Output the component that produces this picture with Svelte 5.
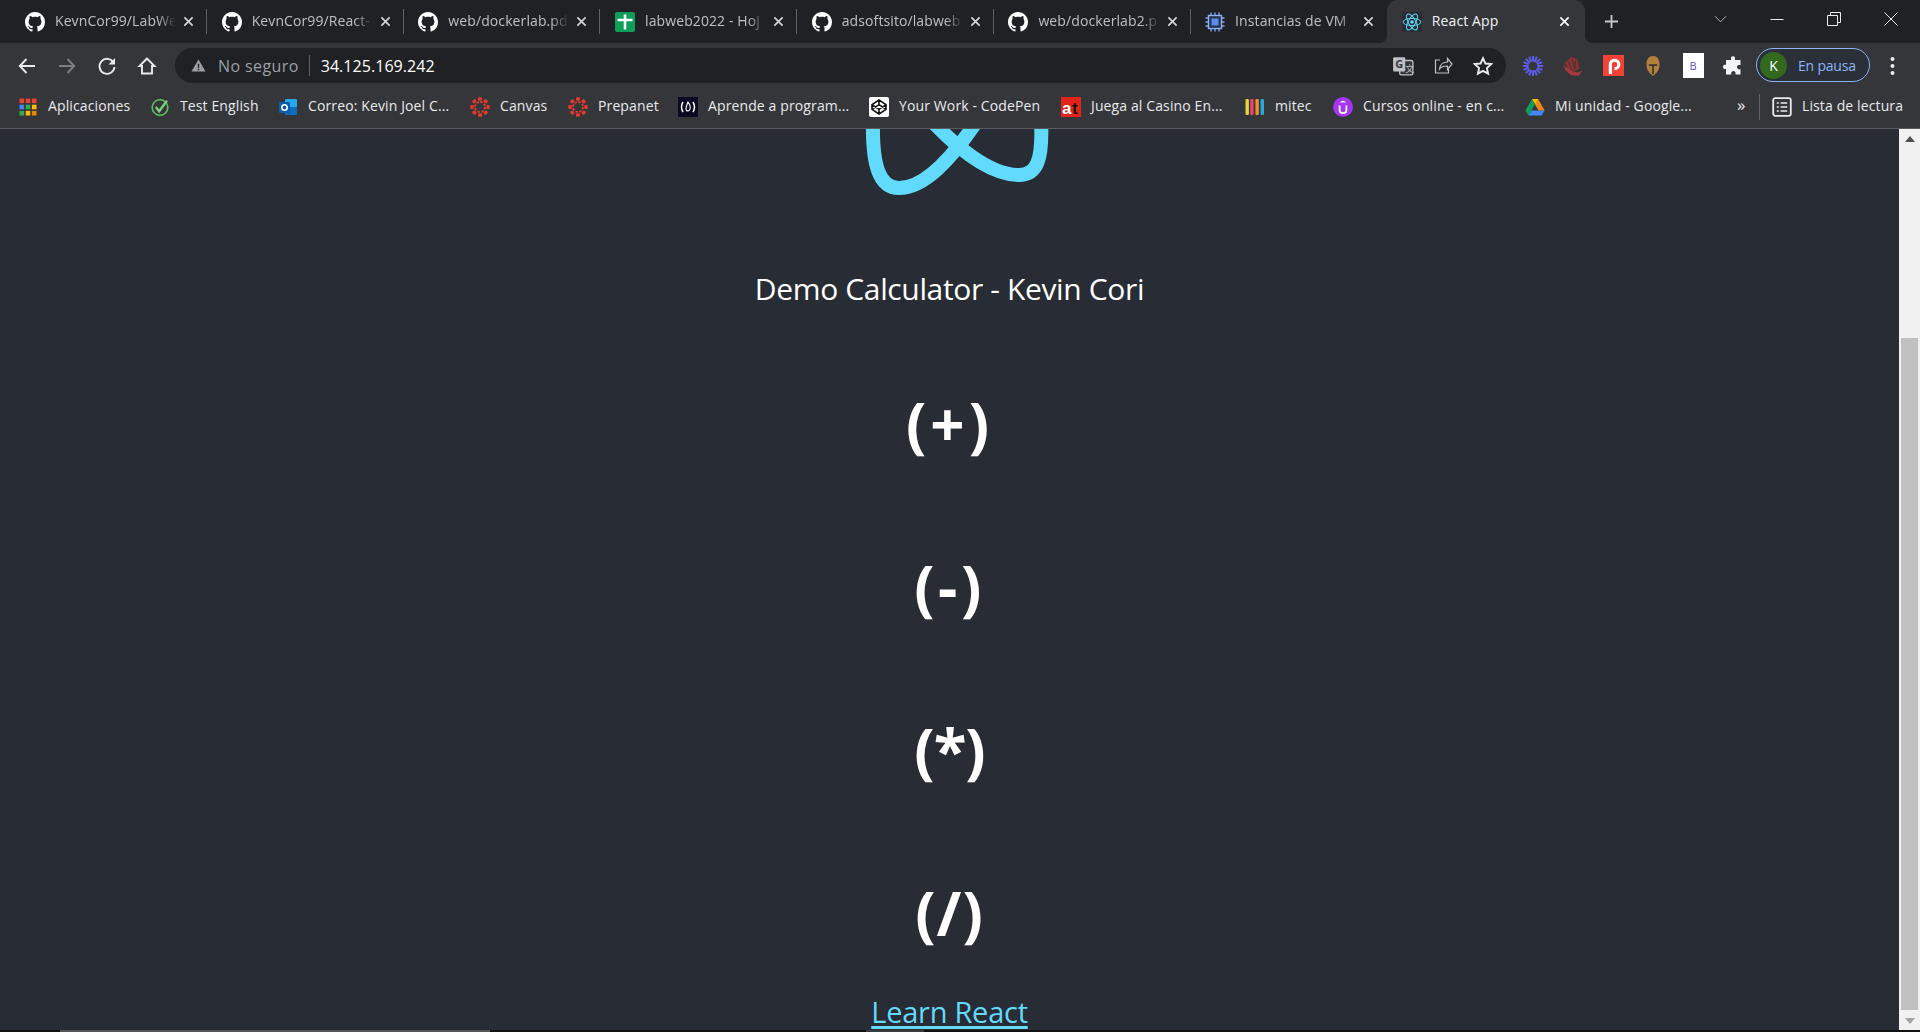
<script>
  const tabs = [
    { icon: 'github', title: 'KevnCor99/LabWe' },
    { icon: 'github', title: 'KevnCor99/React-' },
    { icon: 'github', title: 'web/dockerlab.pd' },
    { icon: 'sheets', title: 'labweb2022 - Hoj' },
    { icon: 'github', title: 'adsoftsito/labweb' },
    { icon: 'github', title: 'web/dockerlab2.p' },
    { icon: 'chip', title: 'Instancias de VM' },
    { icon: 'react', title: 'React App', active: true }
  ];
  const bookmarks = [
    { icon: 'grid', label: 'Aplicaciones', w: 132 },
    { icon: 'check', label: 'Test English', w: 128 },
    { icon: 'outlook', label: 'Correo: Kevin Joel C...', w: 192 },
    { icon: 'canvas', label: 'Canvas', w: 98 },
    { icon: 'canvas', label: 'Prepanet', w: 110 },
    { icon: 'fcc', label: 'Aprende a program...', w: 191 },
    { icon: 'codepen', label: 'Your Work - CodePen', w: 192 },
    { icon: 'at', label: 'Juega al Casino En...', w: 184 },
    { icon: 'mitec', label: 'mitec', w: 88 },
    { icon: 'udemy', label: 'Cursos online - en c...', w: 192 },
    { icon: 'drive', label: 'Mi unidad - Google...', w: 202 }
  ];
  const dots = [0, 45, 90, 135, 180, 225, 270, 315];
  const ops = ['(+)', '(-)', '(*)', '(/)'];
</script>

{#snippet fav(name)}
  <svg class="fav" viewBox="0 0 20 20" aria-hidden="true">
    {#if name === 'github'}
      <g transform="scale(1.25)"><path fill="#fff" d="M8 0C3.58 0 0 3.58 0 8c0 3.54 2.29 6.53 5.47 7.59.4.07.55-.17.55-.38 0-.19-.01-.82-.01-1.49-2.01.37-2.53-.49-2.69-.94-.09-.23-.48-.94-.82-1.13-.28-.15-.68-.52-.01-.53.63-.01 1.08.58 1.23.82.72 1.21 1.87.87 2.33.66.07-.52.28-.87.51-1.07-1.78-.2-3.64-.89-3.64-3.95 0-.87.31-1.59.82-2.15-.08-.2-.36-1.02.08-2.12 0 0 .67-.21 2.2.82.64-.18 1.32-.27 2-.27.68 0 1.36.09 2 .27 1.53-1.04 2.2-.82 2.2-.82.44 1.1.16 1.92.08 2.12.51.56.82 1.27.82 2.15 0 3.07-1.87 3.75-3.65 3.95.29.25.54.73.54 1.48 0 1.07-.01 1.93-.01 2.2 0 .21.15.46.55.38A8.013 8.013 0 0016 8c0-4.42-3.58-8-8-8z"/></g>
    {:else if name === 'sheets'}
      <rect width="20" height="20" rx="2" fill="#0f9d58"/><path d="M2.500 8h15M10 2.500v15" stroke="#fff" stroke-width="2.600"/>
    {:else if name === 'chip'}
      <path d="M6 0.500v19M10 0.500v19M14 0.500v19M0.500 6h19M0.500 10h19M0.500 14h19" stroke="#7ba6f5" stroke-width="1.400"/>
      <rect x="3.500" y="3.500" width="13" height="13" fill="#26304a" stroke="#8ab4f8" stroke-width="1.400"/><rect x="6.500" y="6.500" width="7" height="7" fill="#5b8def"/>
    {:else if name === 'react'}
      <rect width="20" height="20" rx="2" fill="#282c34"/>
      <g fill="none" stroke="#61dafb" stroke-width="1">
        <ellipse cx="10" cy="10" rx="9" ry="3.600"/><ellipse cx="10" cy="10" rx="9" ry="3.600" transform="rotate(60 10 10)"/><ellipse cx="10" cy="10" rx="9" ry="3.600" transform="rotate(120 10 10)"/>
      </g><circle cx="10" cy="10" r="1.800" fill="#61dafb"/>
    {:else if name === 'grid'}
      <g>
        <rect x="1.500" y="1.500" width="4.600" height="4.600" fill="#ea4335"/><rect x="7.700" y="1.500" width="4.600" height="4.600" fill="#ea4335"/><rect x="13.900" y="1.500" width="4.600" height="4.600" fill="#ea4335"/>
        <rect x="1.500" y="7.700" width="4.600" height="4.600" fill="#4285f4"/><rect x="7.700" y="7.700" width="4.600" height="4.600" fill="#34a853"/><rect x="13.900" y="7.700" width="4.600" height="4.600" fill="#fbbc04"/>
        <rect x="1.500" y="13.900" width="4.600" height="4.600" fill="#34a853"/><rect x="7.700" y="13.900" width="4.600" height="4.600" fill="#fbbc04"/><rect x="13.900" y="13.900" width="4.600" height="4.600" fill="#ea8600"/>
      </g>
    {:else if name === 'check'}
      <circle cx="10" cy="10.500" r="7.800" fill="none" stroke="#5cb85c" stroke-width="1.700"/><path d="M5.800 10l3.400 4.200L17 3.600" fill="none" stroke="#7ed07e" stroke-width="2.400"/>
    {:else if name === 'outlook'}
      <rect x="7" y="2" width="12" height="16" rx="1" fill="#28a8ea"/><rect x="7" y="10" width="12" height="8" fill="#0f6cbd"/>
      <rect x="1" y="5" width="11" height="11" rx="1" fill="#0a5ea8"/><circle cx="6.500" cy="10.500" r="2.700" fill="none" stroke="#fff" stroke-width="1.600"/>
    {:else if name === 'canvas'}
      <circle cx="10" cy="10" r="5" fill="none" stroke="#e13a2e" stroke-width="1.800" stroke-dasharray="2.500 1.400"/>
      {#each dots as a}
        <rect x="8" y="0.300" width="4" height="3.400" rx="1" fill="#e8392c" transform="rotate({a} 10 10)"/>
      {/each}
    {:else if name === 'fcc'}
      <rect width="20" height="20" fill="#0a0a23"/>
      <path d="M5 5Q2 10 5 15M15 5q3 5 0 10" fill="none" stroke="#fff" stroke-width="1.500"/>
      <path d="M10 5q3 4 2 7q-1 2-2 2q-2 0-2-2q0-2 2-7z" fill="none" stroke="#fff" stroke-width="1.100"/>
    {:else if name === 'codepen'}
      <rect width="20" height="20" rx="2" fill="#fff"/>
      <path d="M10 3l7 4.600v4.800L10 17l-7-4.600V7.600zM3 7.600l7 4.700 7-4.700M3 12.400l7-4.700 7 4.700M10 3v4.700M10 12.300V17" fill="none" stroke="#111" stroke-width="1.600"/>
    {:else if name === 'at'}
      <rect width="20" height="20" fill="#e2231a"/>
      <text x="1" y="17" class="at-a">a</text><text x="11" y="17" class="at-t">t</text>
    {:else if name === 'mitec'}
      <rect x="0.500" y="2" width="3.400" height="16" rx="1.200" fill="#e6d33c"/><rect x="5.200" y="2" width="3.400" height="16" rx="1.200" fill="#e8446f"/><rect x="10.400" y="2" width="3.400" height="16" rx="1.200" fill="#f39325"/><rect x="15.600" y="2" width="3.400" height="16" rx="1.200" fill="#27a9e1"/>
    {:else if name === 'udemy'}
      <circle cx="10" cy="10" r="10" fill="#a435f0"/>
      <path d="M6.600 8.500v4.200q0 3.400 3.400 3.400t3.400-3.400V8.500" fill="none" stroke="#fff" stroke-width="1.800"/><path d="M10 3.500l3.500 2.100h-7z" fill="#fff"/>
    {:else if name === 'drive'}
      <path d="M7 2h6l6.600 11.400h-6z" fill="#fbbc04"/><path d="M7 2l3 5.500L3.500 18.600.4 13.400z" fill="#0f9d58"/><path d="M6.600 13.400h13l-3 5.200h-13z" fill="#4285f4"/><path d="M13 2l6.600 11.400h-6L10 7.500z" fill="#ea4335" opacity=".45"/>
    {:else if name === 'reading'}
      <rect x="1.200" y="1.200" width="17.600" height="17.600" rx="2" fill="none" stroke="#e8eaed" stroke-width="1.800"/>
      <path d="M4.800 6h2M4.800 10h2M4.800 14h2M8.600 6h6.600M8.600 10h6.600M8.600 14h6.600" stroke="#e8eaed" stroke-width="1.600"/>
    {/if}
  </svg>
{/snippet}

<div class="window">
  <header class="tabstrip">
    {#each tabs as t}
      <div class="tab" class:active={t.active}>
        {@render fav(t.icon)}
        <span class="tab-title">{t.title}</span>
        <svg class="tab-close" viewBox="0 0 12 12"><path d="M1.500 1.500l9 9M10.500 1.500l-9 9"/></svg>
      </div>
    {/each}
    <svg class="new-tab" viewBox="0 0 16 16"><path d="M8 1v14M1 8h14"/></svg>
    <div class="win-controls">
      <svg class="win-chevron" viewBox="0 0 14 8"><path d="M1 1l6 6 6-6"/></svg>
      <span class="win-btn"><svg viewBox="0 0 14 14"><path d="M0.500 7.500h13"/></svg></span>
      <span class="win-btn"><svg viewBox="0 0 14 14"><path d="M3.500 3V0.500h10v10H11M0.500 3.500h10v10H0.500z"/></svg></span>
      <span class="win-btn"><svg viewBox="0 0 14 14"><path d="M0.500 0.500l13 13M13.500 0.500l-13 13"/></svg></span>
    </div>
  </header>

  <div class="toolbar">
    <span class="tool"><svg viewBox="0 0 20 20"><path d="M18 10H3M9.500 3L2.800 10l6.700 7"/></svg></span>
    <span class="tool dim"><svg viewBox="0 0 20 20"><path d="M2 10h15M10.500 3l6.700 7-6.700 7"/></svg></span>
    <span class="tool"><svg viewBox="0 0 20 20"><path d="M16.500 6.500A7.500 7.500 0 1 0 17.500 11"/><path class="solid" d="M18 2v6.500h-6.500z"/></svg></span>
    <span class="tool"><svg viewBox="0 0 20 20"><path d="M10 2.500L2.500 10H5v7.500h10V10h2.500z"/></svg></span>
    <div class="omnibox">
      <svg class="warn" viewBox="0 0 16 16"><path d="M8 1.500L15.500 14.500H0.500z" fill="#9aa0a6"/><path d="M8 6v4.500M8 11.500v1.500" stroke="#202124" stroke-width="1.500"/></svg>
      <span class="insecure">No seguro</span>
      <span class="sep"></span>
      <span class="url">34.125.169.242</span>
      <span class="omni-right">
        <span class="tool"><svg class="translate" viewBox="0 0 20 20"><rect x="7" y="5" width="12" height="13" rx="1.500" fill="#35363a" stroke="#bdc1c6" stroke-width="1.200"/><rect x="1" y="2" width="11" height="13" rx="1" fill="#bdc1c6" stroke="none"/><text x="3" y="12" class="tr-g">G</text><text x="12" y="15" class="tr-x">文</text></svg></span>
        <span class="tool"><svg viewBox="0 0 20 20"><path class="thin" d="M7 4H2.500v13h13v-4"/><path class="thin" d="M6.500 13c.5-4 3.500-7 8-7V2.500l4.500 5.500-4.500 5.500V10c-4 0-6.500 1-8 3z"/></svg></span>
        <span class="tool"><svg viewBox="0 0 20 20"><path d="M10 2.200l2.400 5.300 5.800.6-4.300 3.900 1.200 5.700-5.100-2.900-5.100 2.900 1.200-5.700-4.300-3.900 5.800-.6z"/></svg></span>
      </span>
    </div>
    <span class="tool"><svg class="burst" viewBox="0 0 24 24"><path d="M12 1v22M1 12h22M4.200 4.200l15.600 15.600M19.800 4.200L4.200 19.800M7.800 1.800l8.400 20.400M16.200 1.800L7.800 22.200M1.800 7.800l20.400 8.400M22.200 7.800L1.800 16.200"/><circle cx="12" cy="12" r="5" class="burst-hole"/></svg></span>
    <span class="tool"><svg class="plain" viewBox="0 0 24 24"><path d="M3 9l7-7 7 3 2 10-9 4z" fill="#8f2f2f"/><path d="M1 11l3 6 6 5 8 .5 5-6-6 2.500-6-1.500z" fill="#a33a3a"/><path d="M7 7l4 10M11 4l3 11M15 6l-1 10" stroke="#35363a" stroke-width="1"/></svg></span>
    <span class="tool"><svg class="ext-square" viewBox="0 0 20 20"><rect width="20" height="20" fill="#f44336"/><path d="M7 18V9a4 4 0 1 1 4 4" fill="none" stroke="#fff" stroke-width="3"/></svg></span>
    <span class="tool"><svg class="plain" viewBox="0 0 20 24"><path d="M3 10q0-9 7-9t7 9q1 7-7 13q-8-6-7-13z" fill="#b5803a"/><path d="M5.500 11h9M10 11v10" stroke="#35363a" stroke-width="1.800"/></svg></span>
    <span class="tool"><span class="boot">B</span></span>
    <span class="tool"><svg viewBox="0 0 20 20"><path class="solid-w" d="M8 1.500a2.200 2.200 0 0 1 4 0V4h5.500v5h-2a2.200 2.200 0 0 0 0 4.200h2V18.500H12.500v-2a2.200 2.200 0 0 0-4.200 0v2H3v-5.500H1.500a2.200 2.200 0 0 1 0-4.200H3V4h5z"/></svg></span>
    <div class="profile"><span class="avatar">K</span><span class="paused">En pausa</span></div>
    <span class="tool"><svg class="menu" viewBox="0 0 4 20"><circle cx="2" cy="3" r="2"/><circle cx="2" cy="10" r="2"/><circle cx="2" cy="17" r="2"/></svg></span>
  </div>

  <nav class="bookmarks">
    {#each bookmarks as b}
      <div class="bm" style="width:{b.w}px">
        {@render fav(b.icon)}
        <span>{b.label}</span>
      </div>
    {/each}
    <span class="more">»</span>
    <span class="bm-sep"></span>
    <div class="bm reading">
      {@render fav('reading')}
      <span>Lista de lectura</span>
    </div>
  </nav>

  <div class="viewport">
    <main class="page">
      <svg class="logo" viewBox="850 129 220 70" aria-hidden="true">
        <path d="M874 120C873 165 880 188 900 188C925 188 952 160 980 118"/>
        <path d="M930 118C955 145 990 175 1020 175C1038 175 1044 160 1042 120"/>
      </svg>
      <p class="title">Demo Calculator - Kevin Cori</p>
      {#each ops as op}
        <h1 class="op">{op}</h1>
      {/each}
      <a class="learn" href="#learn">Learn React</a>
    </main>
    <div class="scrollbar">
      <span class="arrow up"></span>
      <div class="track"><div class="thumb"></div></div>
      <span class="arrow down"></span>
    </div>
  </div>

  <footer class="edge"><span class="edge-a"></span><span class="edge-b"></span></footer>
</div>

<style>
  :global(body) { margin: 0; background: #202124; }
  .window {
    height: 1032px; width: 1920px; display: flex; flex-direction: column; overflow: hidden;
    font-family: "Open Sans", "Noto Sans", sans-serif;
  }
  svg { display: block; flex: none; }
  .fav { width: 20px; height: 20px; }

  .tabstrip { height: 43px; flex: none; background: #202124; display: flex; align-items: stretch; padding-left: 10.400px; }
  .tab {
    width: 196.700px; flex: none; box-sizing: border-box; display: flex; align-items: center;
    padding: 0 12px 0 14.600px; position: relative; color: #bdc1c6; font-size: 14px; letter-spacing: 0.1px;
  }
  .tab::after { content: ""; position: absolute; right: 0; top: 9px; bottom: 9px; width: 1px; background: #5f6368; }
  .tab:nth-child(7)::after, .tab.active::after { display: none; }
  .tab-title {
    margin-left: 10px; padding-bottom: 2px; flex: 1; min-width: 0; white-space: nowrap; overflow: hidden;
    -webkit-mask-image: linear-gradient(90deg, #000 85%, transparent 100%);
    mask-image: linear-gradient(90deg, #000 85%, transparent 100%);
  }
  .tab-close { width: 11px; height: 11px; margin-left: 7px; margin-right: 1px; fill: none; stroke: #d5d7da; stroke-width: 1.800; }
  .tab.active { background: #35363a; border-radius: 11px 11px 0 0; color: #f1f3f4; width: 198px; padding-right: 14px; }
  .tab.active .tab-title { -webkit-mask-image: none; mask-image: none; }
  .tab.active .tab-close { stroke: #fff; }
  .tab.active::before, .tab.active::after {
    content: ""; display: block; position: absolute; bottom: 0; top: auto; width: 8px; height: 8px; background: transparent;
  }
  .tab.active::before { left: -8px; background: radial-gradient(circle at 0 0, #202124 8px, #35363a 8.500px); }
  .tab.active::after { right: -8px; background: radial-gradient(circle at 100% 0, #202124 8px, #35363a 8.500px); }
  .new-tab { width: 15px; height: 15px; margin: 14px 0 0 19px; fill: none; stroke: #c4c7c5; stroke-width: 2; }
  .win-controls { margin-left: auto; display: flex; align-items: flex-start; }
  .win-chevron { width: 13px; height: 8px; margin: 15px 21px 0 0; fill: none; stroke: #bdc1c6; stroke-width: 1; }
  .win-btn { width: 57.300px; height: 38px; display: flex; align-items: center; justify-content: center; }
  .win-btn svg { width: 14px; height: 14px; fill: none; stroke: #e8eaed; stroke-width: 1; }

  .toolbar { height: 45px; flex: none; box-sizing: border-box; background: #35363a; display: flex; align-items: flex-start; padding: 5px 8px 0 7px; }
  .tool { width: 40px; height: 35px; flex: none; display: flex; align-items: center; justify-content: center; }
  .tool > svg { width: 20px; height: 20px; fill: none; stroke: #e8eaed; stroke-width: 1.900; }
  .tool.dim > svg { stroke: #7c7f84; }
  .tool .solid { fill: #e8eaed; stroke: none; }
  .tool .thin { stroke: #bdc1c6; stroke-width: 1.200; }
  .tool > svg.ext-square { stroke: none; width: 21px; height: 25px; }
  .tool > svg.plain { stroke: none; width: 22px; height: 22px; }
  .tool > svg.menu { width: 5px; height: 20px; fill: #e8eaed; stroke: none; }
  .tool > svg.translate { stroke: none; width: 22px; height: 22px; }
  .tool > svg.burst { stroke: #5e5ef0; stroke-width: 2.200; width: 22px; height: 22px; }
  .tool .burst-hole { fill: #35363a; stroke: none; }
  .tool > svg .solid-w { fill: #f1f3f4; stroke: none; }
  .omnibox {
    flex: 1; min-width: 0; height: 35px; margin: 0 7px 0 8px; background: #202124; border-radius: 18px;
    display: flex; align-items: center; padding-left: 16px; color: #e8eaed; font-size: 16px;
  }
  .warn { width: 15px; height: 15px; }
  .insecure { color: #9aa0a6; margin-left: 12px; letter-spacing: 0.4px; }
  .sep { width: 1px; height: 21px; background: #5f6368; margin: 0 11px 0 10px; }
  .url { color: #fff; letter-spacing: 0.05px; }
  .omni-right { margin-left: auto; display: flex; margin-right: 3px; }
  .tr-g { font: 700 10px "Open Sans", sans-serif; fill: #35363a; }
  .tr-x { font: 8px "Noto Sans CJK SC", sans-serif; fill: #bdc1c6; }
  .at-a { font: 700 17px "Liberation Sans", sans-serif; fill: #fff; }
  .at-t { font: 700 17px "Liberation Sans", sans-serif; fill: #111; }
  .boot { width: 21px; height: 25px; background: #fff; color: #5b4fc9; font-size: 11px; display: flex; align-items: center; justify-content: center; }
  .profile {
    width: 114px; height: 34px; box-sizing: border-box; flex: none; margin: 0 2px 0 3px; border: 1.500px solid #8ab4f8; border-radius: 17px; background: #2b2f38;
    display: flex; align-items: center; padding-left: 3px; gap: 11px; font-size: 14px; color: #8ab4f8; letter-spacing: -0.2px;
  }
  .avatar { width: 27px; height: 27px; border-radius: 50%; background: #33691e; color: #fff; display: flex; align-items: center; justify-content: center; flex: none; }

  .bookmarks { flex: none; background: #35363a; border-bottom: 1px solid #5a5b5e; display: flex; align-items: center; padding-left: 18px; color: #e8eaed; font-size: 14px; letter-spacing: 0.12px; white-space: nowrap; padding-bottom: 2px; box-sizing: content-box; height: 38px; }
  .bm { display: flex; align-items: center; gap: 10px; flex: none; }
  .bm span { padding-bottom: 3px; }
  .more { width: 10px; margin-left: 10px; padding-bottom: 5px; font-size: 17px; line-height: 1; flex: none; }
  .bm-sep { width: 1px; height: 26px; background: #5f6368; margin: 0 12px 0 12px; flex: none; }

  .viewport { flex: 1; min-height: 0; display: flex; background: #282c34; }
  .page { flex: 1; min-width: 0; overflow: hidden; display: flex; flex-direction: column; align-items: center; color: #fff; }
  .logo { width: 220px; height: 70px; flex: none; margin-left: 19px; fill: none; stroke: #61dafb; stroke-width: 14; }
  .title { margin: 0; height: 144px; flex: none; line-height: 40px; box-sizing: border-box; padding-top: 70px; font-size: 30px; letter-spacing: -0.36px; }
  .op { margin: 0; height: 163px; flex: none; font-size: 60px; line-height: 163px; font-weight: 700; letter-spacing: 1px; }
  .op:nth-of-type(1) { letter-spacing: 4px; }
  .op:nth-of-type(2) { letter-spacing: 3.500px; }
  .op:nth-of-type(3) { letter-spacing: -1px; }
  .learn { color: #61dafb; line-height: 34px; flex: none; font-size: 29px; letter-spacing: -0.25px; text-decoration-thickness: 3px; text-underline-offset: 3px; }

  .scrollbar { width: 21px; flex: none; background: #f1f1f1; display: flex; flex-direction: column; align-items: center; }
  .arrow { flex: none; height: 19px; width: 21px; display: flex; align-items: center; justify-content: center; }
  .arrow::before { content: ""; border-left: 5px solid transparent; border-right: 5px solid transparent; }
  .up::before { border-bottom: 6px solid #505050; }
  .down::before { border-top: 6px solid #a3a3a3; }
  .track { flex: 1; width: 100%; display: flex; flex-direction: column; justify-content: flex-end; }
  .thumb { height: 672px; width: 17px; margin-left: 2px; margin-bottom: 1px; background: #c1c1c1; }

  .edge { height: 2px; flex: none; background: #111214; display: flex; padding-left: 60px; }
  .edge-a { width: 430px; background: #55565a; }
  .edge-b { width: 58px; margin-left: 376px; background: #3a3b3e; }
</style>
